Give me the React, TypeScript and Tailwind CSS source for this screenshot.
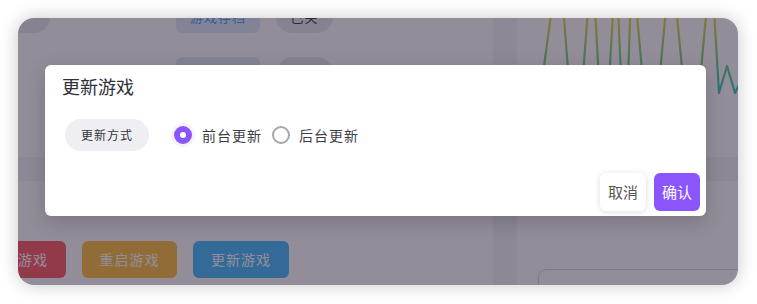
import React from "react";

const font = "font-['Noto_Sans_CJK_SC','Noto_Sans',sans-serif]";

function Chart() {
  const pts = [
    [530, 170], [559, -45], [576, 170], [592, -45], [604, 170], [616, -40], [625, 170],
    [632, -40], [651, 170], [671, -45], [692, 170], [711, -40], [719, 93], [727, 66],
    [735, 93], [742, 78],
  ]
    .map((p) => p.join(","))
    .join(" ");
  return (
    <svg width="221" height="139" viewBox="517 18 221 139" className="block">
      <defs>
        <linearGradient id="lg" gradientUnits="userSpaceOnUse" x1="0" y1="10" x2="0" y2="100">
          <stop offset="0" stopColor="#f8d830" />
          <stop offset="0.55" stopColor="#6fd080" />
          <stop offset="1" stopColor="#1ec8d0" />
        </linearGradient>
      </defs>
      <polyline points={pts} fill="none" stroke="url(#lg)" strokeWidth="2.2" strokeLinejoin="round" />
    </svg>
  );
}

export default function App() {
  return (
    <div className={`w-[757px] h-[304px] bg-white pt-[18px] pl-[18px] ${font}`}>
      <div className="relative w-[720px] h-[267px] rounded-2xl overflow-hidden bg-[#f3f4f6] shadow-[0_0_18px_rgba(0,0,0,0.22)]">
        {/* background page */}
        <div className="flex gap-[24px] h-full">
          <div className="w-[475px] shrink-0 flex flex-col gap-[24px]">
            <div className="h-[139px] bg-white overflow-hidden">
              <div className="-mt-[17px] flex flex-col gap-[24px]">
                <div className="flex items-center h-[32px]">
                  <div className="w-[60px] h-[32px] -ml-[28px] shrink-0 rounded-full bg-[#e8e9ec]" />
                  <div className="ml-[126px] w-[84px] h-[32px] shrink-0 rounded-md bg-[#dfeafb] text-[#4a9af5] text-[13px] flex items-center justify-center tracking-[1px]">
                    游戏存档
                  </div>
                  <div className="ml-[16px] w-[57px] h-[32px] shrink-0 rounded-full bg-[#e8e9ec] text-[#333] text-[13px] flex items-center justify-center tracking-[1px]">
                    已关
                  </div>
                </div>
                <div className="flex items-center h-[32px]">
                  <div className="ml-[158px] w-[84px] h-[32px] shrink-0 rounded-md bg-[#dfeafb]" />
                  <div className="ml-[16px] w-[57px] h-[32px] shrink-0 rounded-full bg-[#e8e9ec]" />
                </div>
              </div>
            </div>
            <div className="flex-1 bg-white overflow-hidden">
              <div className="mt-[60px] flex gap-[16px] -ml-[48px]">
                <div className="w-[96px] h-[37px] shrink-0 rounded-md bg-[#ff5861] text-white text-[14px] tracking-[1px] flex items-center justify-center">
                  停止游戏
                </div>
                <div className="w-[95px] h-[37px] shrink-0 rounded-md bg-[#fbbd3a] text-white text-[14px] tracking-[1px] flex items-center justify-center">
                  重启游戏
                </div>
                <div className="w-[96px] h-[37px] shrink-0 rounded-md bg-[#3fb8fb] text-white text-[14px] tracking-[1px] flex items-center justify-center">
                  更新游戏
                </div>
              </div>
            </div>
          </div>
          <div className="flex-1 min-w-0 flex flex-col gap-[24px]">
            <div className="h-[139px] bg-white overflow-hidden">
              <Chart />
            </div>
            <div className="flex-1 bg-white overflow-hidden">
              <div className="ml-[21px] mt-[88px] w-[260px] h-[80px] rounded-lg border border-[#d6d5da]" />
            </div>
          </div>
        </div>

        {/* overlay */}
        <div className="absolute inset-0 bg-[rgba(40,28,52,0.5)]" />

        {/* dialog */}
        <div className="absolute left-[27px] top-[47px] w-[661px] h-[151px] bg-white rounded-md shadow-[0_6px_20px_rgba(0,0,0,0.18)] flex flex-col">
          <div className="h-[43px] flex items-center pl-[17px] text-[18px] text-[#2f2f3a]">更新游戏</div>
          <div className="mt-[11px] flex items-center pl-[20px]">
            <div className="h-[32px] w-[84px] rounded-full bg-[#efeef2] text-[12px] tracking-[1px] text-[#33333d] flex items-center justify-center">
              更新方式
            </div>
            <div className="ml-[25px] flex items-center">
              <div className="w-[18px] h-[18px] rounded-full border-[6px] border-[#8b55fc] bg-white shadow-[0_0_0_3px_rgba(139,85,252,0.08)]" />
              <span className="ml-[10px] text-[14px] tracking-[1px] text-[#3d3d48]">前台更新</span>
              <div className="ml-[10px] w-[18px] h-[18px] rounded-full border-2 border-[#a9a5ae] bg-white" />
              <span className="ml-[9px] text-[14px] tracking-[1px] text-[#3d3d48]">后台更新</span>
            </div>
          </div>
          <div className="mt-auto flex justify-end gap-[8px] pr-[6px] pb-[5px]">
            <div className="w-[46px] h-[38px] rounded-md bg-white shadow-[0_1px_6px_rgba(0,0,0,0.14)] text-[15px] text-[#555] flex items-center justify-center">
              取消
            </div>
            <div className="w-[46px] h-[38px] rounded-md bg-[#8b55fc] text-[15px] text-white flex items-center justify-center">
              确认
            </div>
          </div>
        </div>
      </div>
    </div>
  );
}
